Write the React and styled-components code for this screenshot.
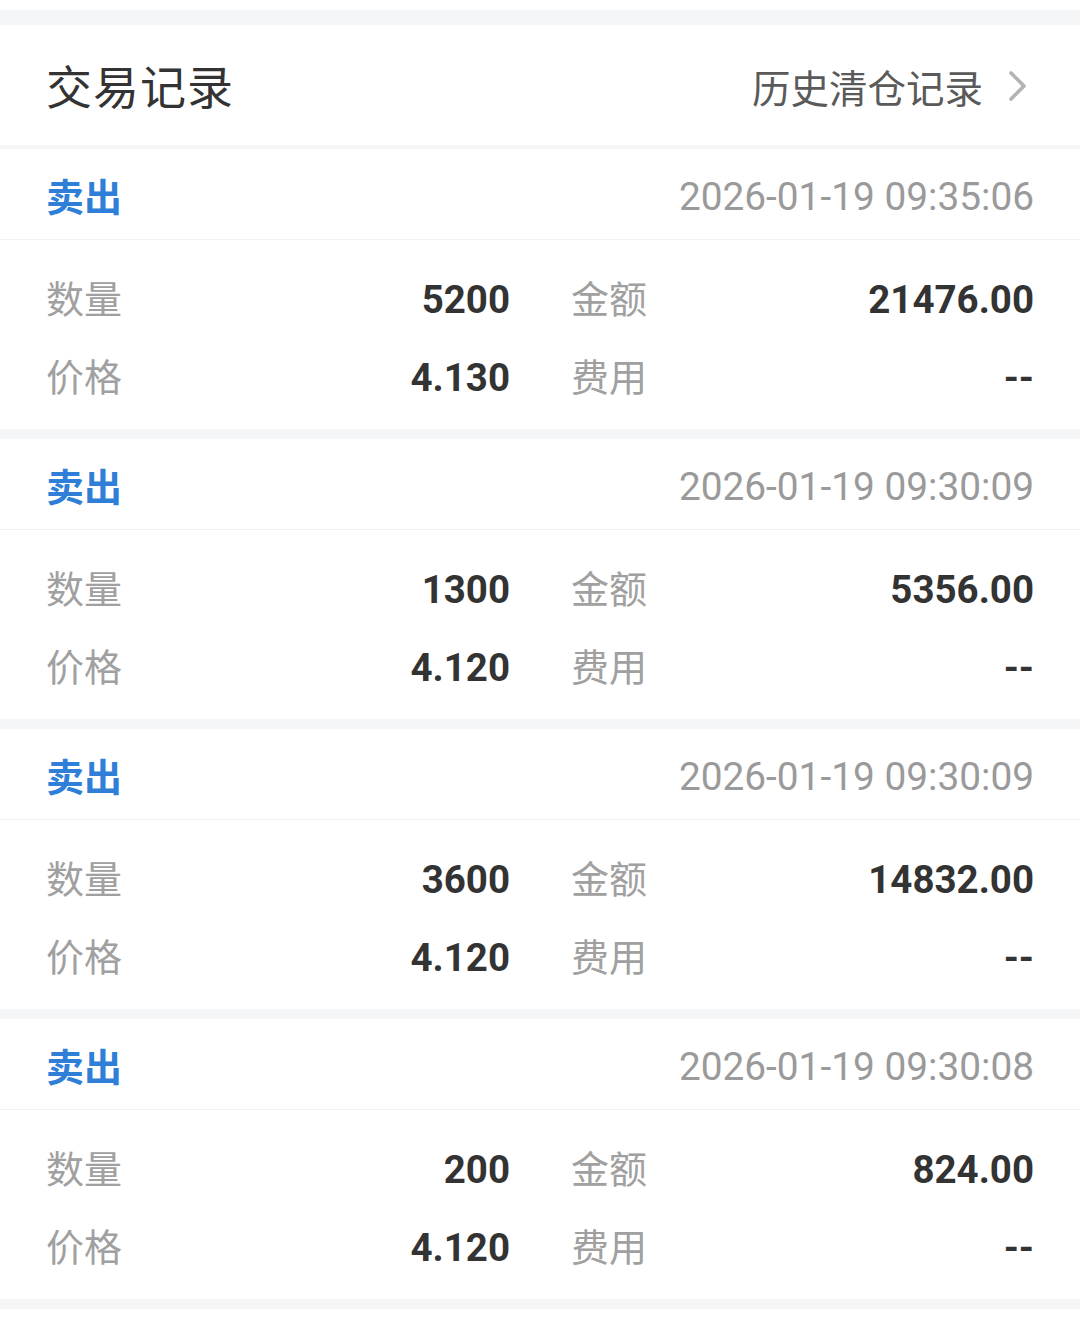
import React from "react";
import styled, { createGlobalStyle } from "styled-components";

const GlobalStyle = createGlobalStyle`
  html, body {
    margin: 0;
    padding: 0;
    background: #ffffff;
  }
  body {
    font-family: Roboto, "Noto Sans CJK SC", sans-serif;
  }
`;

const trades = [
  { time: "2026-01-19 09:35:06", qty: "5200", amount: "21476.00", price: "4.130", fee: "--" },
  { time: "2026-01-19 09:30:09", qty: "1300", amount: "5356.00", price: "4.120", fee: "--" },
  { time: "2026-01-19 09:30:09", qty: "3600", amount: "14832.00", price: "4.120", fee: "--" },
  { time: "2026-01-19 09:30:08", qty: "200", amount: "824.00", price: "4.120", fee: "--" },
];

const Page = () => {
  return (
    <Wrp>
      <GlobalStyle />
      <Gap $h={15} />
      <Header>
        <Title>交易记录</Title>
        <HistoryLink>
          历史清仓记录
          <svg width="22" height="34" viewBox="0 0 22 34">
            <path
              d="M4 3 L17 16 L4 29"
              fill="none"
              stroke="#b3b3b3"
              strokeWidth="3.6"
              strokeLinecap="round"
              strokeLinejoin="round"
            />
          </svg>
        </HistoryLink>
      </Header>
      <Gap $h={4} />
      {trades.map((t, i) => (
        <React.Fragment key={i}>
          <Card>
            <CardHead>
              <Side>卖出</Side>
              <Time>{t.time}</Time>
            </CardHead>
            <CardBody>
              <Cell>
                <Label>数量</Label>
                <Value>{t.qty}</Value>
              </Cell>
              <Cell>
                <Label>金额</Label>
                <Value>{t.amount}</Value>
              </Cell>
              <Cell>
                <Label>价格</Label>
                <Value>{t.price}</Value>
              </Cell>
              <Cell>
                <Label>费用</Label>
                <Value>{t.fee}</Value>
              </Cell>
            </CardBody>
          </Card>
          <Gap $h={10} />
        </React.Fragment>
      ))}
    </Wrp>
  );
};

const Wrp = styled.div`
  width: 1080px;
  padding-top: 10px;
  background: #ffffff;
`;

const Gap = styled.div`
  height: ${(p) => p.$h}px;
  background: #f5f6f8;
`;

const Header = styled.div`
  height: 120px;
  display: flex;
  align-items: center;
  justify-content: space-between;
  padding: 0 46px;
  box-sizing: border-box;
`;

const Title = styled.h1`
  margin: 0;
  font-size: 46px;
  font-weight: 400;
  color: #333333;
  letter-spacing: 1px;
  padding-bottom: 2px;
`;

const HistoryLink = styled.div`
  display: flex;
  align-items: center;
  gap: 24px;
  font-size: 38.5px;
  color: #5a5a5a;
  margin-right: 5px;
  padding-top: 2px;

  svg {
    margin-top: 2px;
  }
`;

const Card = styled.div`
  background: #ffffff;
`;

const CardHead = styled.div`
  height: 91px;
  display: flex;
  align-items: center;
  justify-content: space-between;
  padding: 0 46px;
  border-bottom: 1px solid #f1f1f3;
  box-sizing: border-box;
`;

const Side = styled.span`
  font-size: 38px;
  font-weight: 700;
  color: #2f7fd8;
`;

const Time = styled.span`
  font-size: 38.8px;
  color: #9a9a9a;
  padding-top: 5px;
`;

const CardBody = styled.div`
  display: grid;
  grid-template-columns: 464px 463px;
  column-gap: 61px;
  grid-auto-rows: 78px;
  padding: 20px 46px 13px;
`;

const Cell = styled.div`
  display: flex;
  align-items: center;
  justify-content: space-between;
`;

const Label = styled.span`
  font-size: 38px;
  color: #a0a0a0;
  padding-bottom: 5px;
`;

const Value = styled.span`
  font-size: 38.5px;
  font-weight: 700;
  color: #333333;
`;

export default function App() {
  return <Page />;
}
